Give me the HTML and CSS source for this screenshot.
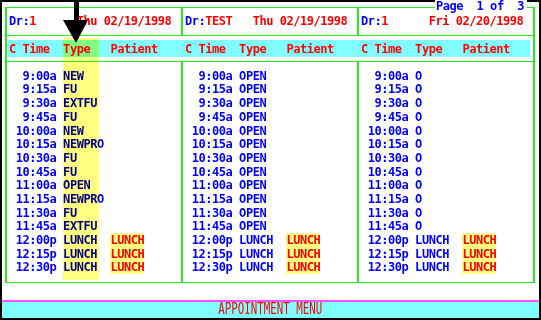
FILE: index.html
```html
<!DOCTYPE html>
<html lang="en">
<head>
    <meta charset="UTF-8">
    <title>Appointment Menu</title>
    <link rel="stylesheet" href="styles.css">
</head>
<body>
    <div class="screen">
        <div class="board">
            <div class="head">
                <div class="cell"><span class="lbl">Dr:</span><span class="red">1      Thu 02/19/1998</span></div>
                <div class="cell mid"><span class="lbl">Dr:</span><span class="red">TEST   Thu 02/19/1998</span></div>
                <div class="cell"><span class="lbl">Dr:</span><span class="red">1      Fri 02/20/1998</span></div>
            </div>

            <div class="bar">
                <div class="cell first">C Time  Type   Patient</div>
                <div class="cell">C Time  Type   Patient</div>
                <div class="cell">C Time  Type   Patient</div>
            </div>

            <div class="body">
                <!-- Dr:1 Thu -->
                <div class="cell">
                    <div class="row">  9:00a NEW</div>
                    <div class="row">  9:15a FU</div>
                    <div class="row">  9:30a EXTFU</div>
                    <div class="row">  9:45a FU</div>
                    <div class="row"> 10:00a NEW</div>
                    <div class="row"> 10:15a NEWPRO</div>
                    <div class="row"> 10:30a FU</div>
                    <div class="row"> 10:45a FU</div>
                    <div class="row"> 11:00a OPEN</div>
                    <div class="row"> 11:15a NEWPRO</div>
                    <div class="row"> 11:30a FU</div>
                    <div class="row"> 11:45a EXTFU</div>
                    <div class="row"> 12:00p LUNCH  <span class="lunch">LUNCH</span></div>
                    <div class="row"> 12:15p LUNCH  <span class="lunch">LUNCH</span></div>
                    <div class="row"> 12:30p LUNCH  <span class="lunch">LUNCH</span></div>
                </div>

                <!-- Dr:TEST Thu -->
                <div class="cell mid">
                    <div class="row">  9:00a OPEN</div>
                    <div class="row">  9:15a OPEN</div>
                    <div class="row">  9:30a OPEN</div>
                    <div class="row">  9:45a OPEN</div>
                    <div class="row"> 10:00a OPEN</div>
                    <div class="row"> 10:15a OPEN</div>
                    <div class="row"> 10:30a OPEN</div>
                    <div class="row"> 10:45a OPEN</div>
                    <div class="row"> 11:00a OPEN</div>
                    <div class="row"> 11:15a OPEN</div>
                    <div class="row"> 11:30a OPEN</div>
                    <div class="row"> 11:45a OPEN</div>
                    <div class="row"> 12:00p LUNCH  <span class="lunch">LUNCH</span></div>
                    <div class="row"> 12:15p LUNCH  <span class="lunch">LUNCH</span></div>
                    <div class="row"> 12:30p LUNCH  <span class="lunch">LUNCH</span></div>
                </div>

                <!-- Dr:1 Fri -->
                <div class="cell">
                    <div class="row">  9:00a O</div>
                    <div class="row">  9:15a O</div>
                    <div class="row">  9:30a O</div>
                    <div class="row">  9:45a O</div>
                    <div class="row"> 10:00a O</div>
                    <div class="row"> 10:15a O</div>
                    <div class="row"> 10:30a O</div>
                    <div class="row"> 10:45a O</div>
                    <div class="row"> 11:00a O</div>
                    <div class="row"> 11:15a O</div>
                    <div class="row"> 11:30a O</div>
                    <div class="row"> 11:45a O</div>
                    <div class="row"> 12:00p LUNCH  <span class="lunch">LUNCH</span></div>
                    <div class="row"> 12:15p LUNCH  <span class="lunch">LUNCH</span></div>
                    <div class="row"> 12:30p LUNCH  <span class="lunch">LUNCH</span></div>
                </div>
            </div>
        </div>

        <div class="menu"><span>APPOINTMENT MENU</span></div>

        <!-- overlays -->
        <div class="page">Page  1 of  3</div>
        <div class="hilite"></div>
        <svg class="arrow" width="26" height="44" viewBox="0 0 26 44">
            <rect x="11" y="0" width="5" height="21" fill="#000"/>
            <polygon points="0,20 25,20 13,43" fill="#000"/>
        </svg>
    </div>
</body>
</html>
```

FILE: styles.css
```css
* {
    margin: 0;
    padding: 0;
    box-sizing: border-box;
}

body {
    background: #fff;
    font-family: "DejaVu Sans Mono", monospace;
    font-weight: bold;
    font-size: 12px;
    letter-spacing: -0.46px;
    line-height: 13.7px;
    color: #0000ff;
}

.screen {
    position: relative;
    width: 541px;
    height: 320px;
    border: 2px solid #000;
    background: #fff;
}

.red {
    color: #ff0000;
}

.lbl {
    color: #0000ff;
}

.head .cell,
.bar .cell,
.page,
.row {
    white-space: pre;
}

/* green frame */
.board {
    margin: 5px 4px 0 3px;
    border: solid #22ee22;
    border-width: 1px 2px;
}

.head {
    display: grid;
    grid-template-columns: 174px 178px 174px;
    height: 28px;
    border-bottom: 1px solid #22ee22;
}

.head .cell {
    padding: 6.5px 0 0 2px;
}

.mid {
    border-left: 2px solid #22ee22;
    border-right: 2px solid #22ee22;
}

/* column titles */
.bar {
    display: grid;
    grid-template-columns: 175px 176px 171px;
    height: 17px;
    margin: 4px 3px 0 1px;
    padding-top: 2.75px;
    background: #80ffff;
    color: #ff0000;
}

.bar .cell {
    padding-left: 2px;
}

.bar .first {
    padding-left: 1px;
}

/* slots */
.body {
    display: grid;
    grid-template-columns: 174px 178px 174px;
    height: 221px;
    margin-top: 4px;
    border-top: 1px solid #22ee22;
}

.body .cell {
    padding: 7.75px 0 0 2px;
}

.row {
    height: 13.7px;
}

.lunch {
    color: #ff0000;
    background: #ffff80;
}

/* bottom menu line */
.menu {
    margin-top: 17px;
    height: 18px;
    border-top: 2px solid #ff50ff;
    background: #80ffff;
    text-align: center;
}

.menu span {
    display: inline-block;
    font-family: "DejaVu Sans Mono", monospace;
    font-weight: normal;
    font-size: 15px;
    line-height: 14px;
    letter-spacing: 0;
    color: #ff0000;
    transform: scaleX(0.72);
}

/* overlays */
.page {
    position: absolute;
    top: -2px;
    left: 433px;
    padding: 0 3px 0 1px;
    background: #fff;
    color: #0000ff;
}

.hilite {
    position: absolute;
    left: 61px;
    top: 36px;
    width: 36px;
    height: 242px;
    background: #ffff80;
    mix-blend-mode: multiply;
}

.arrow {
    position: absolute;
    left: 61px;
    top: -2px;
}
```
